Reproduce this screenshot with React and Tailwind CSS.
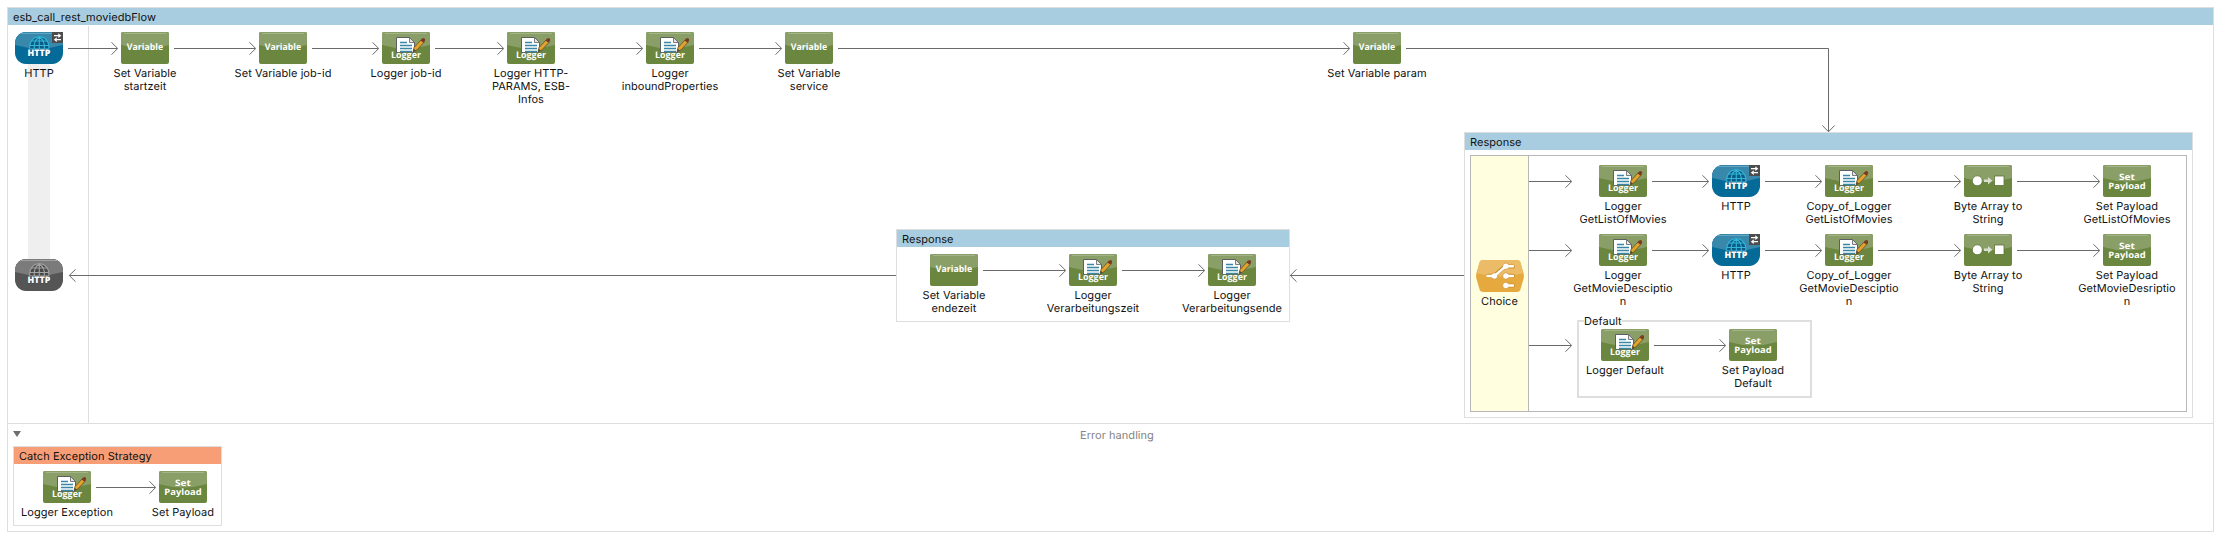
import React from "react";

const HEAD = "M0.5 0.3 L6.7 6.5 L0.5 12.7";

function Gloss({ id, top, bottom, shine, d }) {
  return (
    <>
      <clipPath id={id}>
        <path d={d} />
      </clipPath>
      <g clipPath={`url(#${id})`}>
        <rect width="48" height="32" fill={bottom} />
        <path d="M0 0H48V13Q24 20 0 13Z" fill={top} />
        <path d="M3 1.5H45" stroke={shine} strokeWidth="1" />
      </g>
    </>
  );
}

const SQUARE = "M2 0H46Q48 0 48 2V30Q48 32 46 32H2Q0 32 0 30V2Q0 0 2 0Z";
const PILL = "M11 0H37C44 0 48 6 48 11V21C48 26 44 32 37 32H11C4 32 0 26 0 21V11C0 6 4 0 11 0Z";
const HEX = "M7 0H41Q43.5 0 44.3 2L47.6 13.500Q48.200 16 47.600 18.500L44.300 30Q43.500 32 41 32H7Q4.500 32 3.700 30L0.400 18.500Q-0.200 16 0.400 13.500L3.700 2Q4.500 0 7 0Z";

function Caption({ x = 24, y, size, length, children }) {
  return (
    <text
      x={x}
      y={y}
      fontSize={size}
      textLength={length}
      lengthAdjust="spacingAndGlyphs"
      textAnchor="middle"
      fill="#fff"
      className="font-['Open_Sans',sans-serif] font-bold"
    >
      {children}
    </text>
  );
}

function Icon({ type }) {
  const id = React.useId();
  const frame = "block h-8 w-12 shrink-0";
  const green = <Gloss id={id} d={SQUARE} top="#8a9f68" bottom="#6b863e" shine="#a3b488" />;

  if (type === "variable")
    return (
      <svg viewBox="0 0 48 32" className={frame}>
        {green}
        <Caption y="18.2" size="9" length="36.500">Variable</Caption>
      </svg>
    );

  if (type === "payload")
    return (
      <svg viewBox="0 0 48 32" className={frame}>
        {green}
        <Caption y="14.7" size="8.8" length="16">Set</Caption>
        <Caption y="23.8" size="8.8" length="37.500">Payload</Caption>
      </svg>
    );

  if (type === "logger")
    return (
      <svg viewBox="0 0 48 32" className={frame}>
        {green}
        <path d="M14.500 5.500H27.500L32.500 10.500V20.500H14.500Z" fill="#fff" stroke="#5c6063" />
        <path d="M27.500 5.500V10.500H32.500Z" fill="#e6e6e6" stroke="#5c6063" strokeWidth="0.8" />
        <path d="M18 10.500H25M18 13.500H30M18 16.500H30M18 19.500H30" stroke="#3a86a4" strokeWidth="1.3" />
        <path d="M31 19.800L32 15.600L39.800 7.200L42.600 9.600L34.800 18Z" fill="#e2a42e" stroke="#6b4d1c" strokeWidth="0.8" />
        <path d="M31 19.800L31.700 16.800L33.700 18.500Z" fill="#4a4a4a" />
        <path d="M38.600 8.500L40.300 6.600Q41.500 5.300 42.600 6.400Q43.700 7.500 42.800 8.900L41.300 10.800Z" fill="#7a3b22" />
        <text
          x="24"
          y="26.200"
          fontSize="9"
          textLength="30"
          lengthAdjust="spacingAndGlyphs"
          textAnchor="middle"
          fill="#fff"
          stroke="#6b863e"
          strokeWidth="1.2"
          paintOrder="stroke"
          className="font-['Open_Sans',sans-serif] font-bold"
        >
          Logger
        </text>
      </svg>
    );

  if (type === "transform")
    return (
      <svg viewBox="0 0 48 32" className={frame}>
        {green}
        <circle cx="13.300" cy="15.800" r="5" fill="#fff" stroke="#5c7336" strokeWidth="0.8" />
        <path d="M20 14.500H24V12L28.300 15.800L24 19.500V17H20Z" fill="#d8dfcc" />
        <rect x="30.500" y="11" width="9.500" height="9.500" fill="#fff" stroke="#5c7336" strokeWidth="0.8" />
      </svg>
    );

  if (type === "choice")
    return (
      <svg viewBox="0 0 48 32" className={frame}>
        <Gloss id={id} d={HEX} top="#ecbb68" bottom="#e5a93e" shine="#ecbb68" />
        <g fill="none" stroke="#c98d28" strokeWidth="4" strokeLinecap="round">
          <path d="M12 15.700H18L29 6.500H37M31 15.700H37M31 25.500H37" />
        </g>
        <g fill="#fff" stroke="#c98d28" strokeWidth="0.7">
          <circle cx="18.500" cy="16" r="3.200" />
          <circle cx="29.800" cy="6.200" r="3.200" />
          <circle cx="29.800" cy="16" r="3.200" />
          <circle cx="29.800" cy="25.500" r="3.200" />
        </g>
        <path d="M11.500 16H18.500L29.800 6.200H37M30 16H37M30 25.500H37" fill="none" stroke="#fff" strokeWidth="2.400" strokeLinecap="round" />
      </svg>
    );

  const off = type === "http-off";
  const globe = off ? "#a3a3a3" : "#35b6d6";
  return (
    <svg viewBox="0 0 48 32" className={frame}>
      <Gloss
        id={id}
        d={PILL}
        top={off ? "#7b7b7b" : "#3888ac"}
        bottom={off ? "#555555" : "#046a98"}
        shine={off ? "#a0a0a0" : "#64a5c1"}
      />
      <g fill="none" stroke={globe} strokeWidth="1.1">
        <path d="M14.800 17C14 9.500 18.500 4.800 24.300 4.800S34.600 9.500 33.800 17Z" fill={off ? "#484848" : "#0a5c86"} />
        <path d="M24.300 5V17M19.300 17C18.700 11.500 20.700 7 24.300 5C27.900 7 29.900 11.500 29.300 17M16.400 9H32.200M14.700 13.500H33.900" />
      </g>
      <text
        x="24"
        y="23.900"
        fontSize="9"
        textLength="23"
        lengthAdjust="spacingAndGlyphs"
        textAnchor="middle"
        fill="#fff"
        stroke={off ? "#484848" : "#075f8a"}
        strokeWidth="1.200"
        paintOrder="stroke"
        className="font-['Open_Sans',sans-serif] font-extrabold"
      >
        HTTP
      </text>
      {!off && (
        <g>
          <rect x="37" y="0" width="11" height="11" fill="#4d4d4d" />
          <path d="M39 3.700H44M41.500 7.700H46" stroke="#fff" strokeWidth="1.200" />
          <path d="M43.300 1.300L46.300 3.700L43.300 6.100ZM41.800 5.300L38.800 7.700L41.800 10.100Z" fill="#fff" />
        </g>
      )}
    </svg>
  );
}

function Node({ type, label }) {
  return (
    <div className="flex w-12 shrink-0 flex-col items-center">
      <Icon type={type} />
      {label && <div className="mt-[3px] text-center whitespace-pre">{label}</div>}
    </div>
  );
}

function Arrow({ length, flush }) {
  return (
    <svg
      width={length}
      height="13"
      className={flush ? "mt-2.5 block shrink-0" : "mt-2.5 mr-[3px] ml-[5px] block shrink-0"}
      fill="none"
      stroke="#6a6a6a"
    >
      <path d={`M0 6.500H${length - 0.5}`} />
      <path d={HEAD} transform={`translate(${length - 7} 0)`} />
    </svg>
  );
}

/* A chain of nodes; each entry after the first is preceded by an arrow of the given length. */
function Chain({ items }) {
  return (
    <div className="flex items-start">
      {items.map(([type, label, gap], i) => (
        <React.Fragment key={i}>
          {gap && <Arrow length={gap} />}
          <Node type={type} label={label} />
        </React.Fragment>
      ))}
    </div>
  );
}

function Title({ children, tone = "bg-[#a8cde0]" }) {
  return <div className={`h-[17px] shrink-0 pl-[5px] leading-[18px] ${tone}`}>{children}</div>;
}

const MAIN = [
  ["http", "HTTP"],
  ["variable", "Set Variable\nstartzeit", 50],
  ["variable", "Set Variable job-id", 82],
  ["logger", "Logger job-id", 67],
  ["logger", "Logger HTTP-\nPARAMS, ESB-\nInfos", 69],
  ["logger", "Logger\ninboundProperties", 83],
  ["variable", "Set Variable\nservice", 83],
  ["variable", "Set Variable param", 512],
];

const RESPONSE = [
  ["variable", "Set Variable\nendezeit"],
  ["logger", "Logger\nVerarbeitungszeit", 83],
  ["logger", "Logger\nVerarbeitungsende", 83],
];

const LIST_ROUTE = [
  ["logger", "Logger\nGetListOfMovies"],
  ["http", "HTTP", 57],
  ["logger", "Copy_of_Logger\nGetListOfMovies", 57],
  ["transform", "Byte Array to\nString", 83],
  ["payload", "Set Payload\nGetListOfMovies", 83],
];

const DETAIL_ROUTE = [
  ["logger", "Logger\nGetMovieDesciptio\nn"],
  ["http", "HTTP", 57],
  ["logger", "Copy_of_Logger\nGetMovieDesciptio\nn", 57],
  ["transform", "Byte Array to\nString", 83],
  ["payload", "Set Payload\nGetMovieDesriptio\nn", 83],
];

const DEFAULT_ROUTE = [
  ["logger", "Logger Default"],
  ["payload", "Set Payload\nDefault", 72],
];

const CATCH = [
  ["logger", "Logger Exception"],
  ["payload", "Set Payload", 60],
];

function Edges() {
  return (
    <svg className="absolute top-0 left-0" width="2205" height="398" fill="none" stroke="#6a6a6a">
      <path d="M1398 23.500H1820.500V106.500" />
      <path d={HEAD} transform="translate(1827 100) rotate(90)" />
      <path d="M1456 250.500H1282" />
      <path d={HEAD} transform="translate(1289 257) rotate(180)" />
      <path d="M888 250.500H61.500" />
      <path d={HEAD} transform="translate(68 257) rotate(180)" />
    </svg>
  );
}

export default function App() {
  return (
    <div className="h-[539px] w-[2221px] bg-white pt-[7px] pl-[7px] font-[Inter,'Liberation_Sans',sans-serif] text-[11px] leading-[13px] tracking-[0.05px] text-[#111] [text-rendering:geometricPrecision]">
      <div className="flex h-[525px] w-[2207px] flex-col border border-[#dedede]">
        <Title>esb_call_rest_moviedbFlow</Title>

        <div className="relative h-[398px] shrink-0 pt-[7px] pl-[7px]">
          <div className="absolute top-[39px] left-5 h-[195px] w-[22px] bg-[#efefef]" />
          <div className="absolute top-px left-20 h-[397px] w-px bg-[#dedede]" />
          <div className="relative">
            <Chain items={MAIN} />
          </div>
          <Edges />
          <div className="absolute top-[234px] left-[7px]">
            <Node type="http-off" />
          </div>

          <section className="absolute top-[204px] left-[888px] h-[93px] w-[394px] border border-[#dedede] bg-white">
            <Title>Response</Title>
            <div className="pt-[7px] pl-[33px]">
              <Chain items={RESPONSE} />
            </div>
          </section>

          <section className="absolute top-[107px] left-[1456px] flex h-[286px] w-[729px] flex-col border border-[#dedede] bg-white">
            <Title>Response</Title>
            <div className="mx-[5px] mt-[5px] flex h-[257px] border border-[#b8b8b8]">
              <div className="flex w-[58px] items-start justify-center border-r border-[#b8b8b8] bg-[#ffffe0] pt-[104px]">
                <Node type="choice" label="Choice" />
              </div>
              <div className="flex flex-col pt-[9px]">
                <div className="flex h-[69px] items-start gap-[27px]">
                  <Arrow length={43} flush />
                  <Chain items={LIST_ROUTE} />
                </div>
                <div className="flex h-[86px] items-start gap-[27px]">
                  <Arrow length={43} flush />
                  <Chain items={DETAIL_ROUTE} />
                </div>
                <div className="flex items-start gap-[5px]">
                  <div className="pt-[9px]">
                    <Arrow length={43} flush />
                  </div>
                  <div className="flex h-[78px] w-[235px] flex-col border-2 border-[#dedede] pl-[22px]">
                    <div className="-mt-[7px] mb-px -ml-[17px] self-start bg-white">Default</div>
                    <Chain items={DEFAULT_ROUTE} />
                  </div>
                </div>
              </div>
            </div>
          </section>
        </div>

        <div className="flex grow flex-col border-t border-[#dedede] pl-[5px]">
          <div className="flex h-[22px] items-start pt-[5px]">
            <svg width="8" height="6" className="mt-0.5 block">
              <path d="M0 0H8L4 6Z" fill="#6e6e6e" />
            </svg>
            <div className="ml-[1059px] text-[#858585]">Error handling</div>
          </div>
          <section className="h-20 w-[209px] border border-[#dedede]">
            <Title tone="bg-[#f89e76]">Catch Exception Strategy</Title>
            <div className="pt-[7px] pl-[29px]">
              <Chain items={CATCH} />
            </div>
          </section>
        </div>
      </div>
    </div>
  );
}
